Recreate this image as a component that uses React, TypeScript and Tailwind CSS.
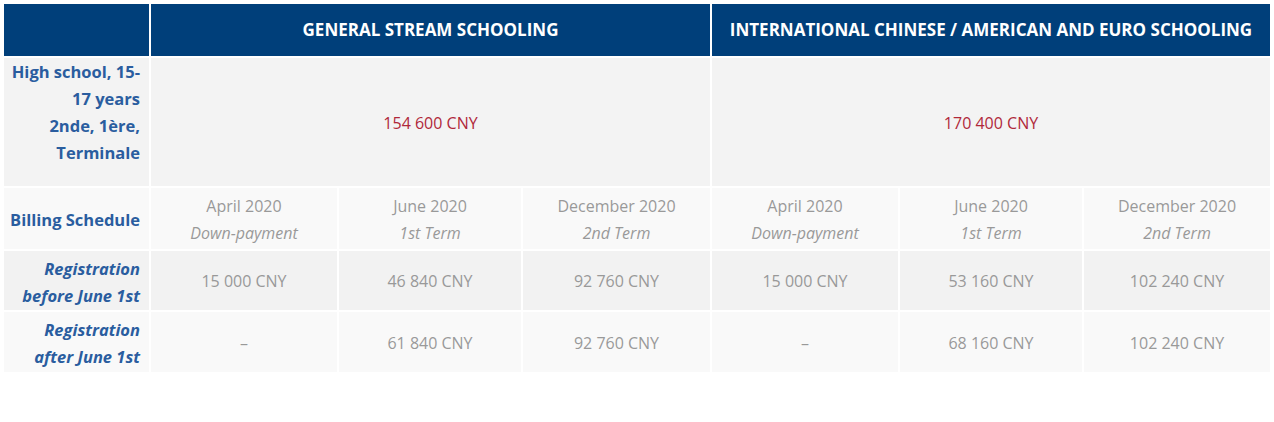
import React from "react";

const font = { fontFamily: '"Open Sans", "Noto Sans", Arial, sans-serif' };

type Pay = { month: string; term: string };

const schedule: Pay[] = [
  { month: "April 2020", term: "Down-payment" },
  { month: "June 2020", term: "1st Term" },
  { month: "December 2020", term: "2nd Term" },
];

const before = ["15 000 CNY", "46 840 CNY", "92 760 CNY", "15 000 CNY", "53 160 CNY", "102 240 CNY"];
const after = ["–", "61 840 CNY", "92 760 CNY", "–", "68 160 CNY", "102 240 CNY"];

function Label({ children, bg }: { children: React.ReactNode; bg: string }) {
  return (
    <div className={`${bg} flex flex-col justify-center items-end text-right pr-[9px] font-bold text-[#2a5d9f] leading-[27px] text-[16.5px]`}>
      {children}
    </div>
  );
}

function Cell({ children, bg }: { children: React.ReactNode; bg: string }) {
  return (
    <div className={`${bg} flex flex-col items-center justify-center text-center text-[#999999] leading-[27px] pt-[2px]`}>
      {children}
    </div>
  );
}

export default function App() {
  return (
    <div className="bg-white w-[1274px] h-[422px] p-[4px]" style={font}>
      <div className="grid grid-cols-[145px_186px_182px_187px_186px_182px_186px] grid-rows-[52px_128px_61px_59px_60px] gap-[2px] text-[16px] w-[1266px]">
        <div className="bg-[#003f7a]" />
        <div className="col-span-3 bg-[#003f7a] flex items-center justify-center text-white font-bold text-[17px]">
          GENERAL STREAM SCHOOLING
        </div>
        <div className="col-span-3 bg-[#003f7a] flex items-center justify-center text-white font-bold text-[17px]">
          INTERNATIONAL CHINESE / AMERICAN AND EURO SCHOOLING
        </div>

        <Label bg="bg-[#f3f3f3] pb-[20px]">
          <span>High school, 15-</span>
          <span>17 years</span>
          <span>2nde, 1ère,</span>
          <span>Terminale</span>
        </Label>
        <div className="col-span-3 bg-[#f3f3f3] flex items-center justify-center text-[#b0283a] pt-[2px]">
          154 600 CNY
        </div>
        <div className="col-span-3 bg-[#f3f3f3] flex items-center justify-center text-[#b0283a] pt-[2px]">
          170 400 CNY
        </div>

        <Label bg="bg-[#f9f9f9] pt-[2px]">
          <span>Billing Schedule</span>
        </Label>
        {[...schedule, ...schedule].map((s, i) => (
          <Cell key={i} bg="bg-[#f9f9f9]">
            <span>{s.month}</span>
            <span className="italic">{s.term}</span>
          </Cell>
        ))}

        <Label bg="bg-[#f2f2f2] italic pt-[2px]">
          <span>Registration</span>
          <span>before June 1st</span>
        </Label>
        {before.map((v, i) => (
          <Cell key={i} bg="bg-[#f2f2f2]">
            {v}
          </Cell>
        ))}

        <Label bg="bg-[#f9f9f9] italic pt-[2px]">
          <span>Registration</span>
          <span>after June 1st</span>
        </Label>
        {after.map((v, i) => (
          <Cell key={i} bg="bg-[#f9f9f9]">
            {v}
          </Cell>
        ))}
      </div>
    </div>
  );
}
